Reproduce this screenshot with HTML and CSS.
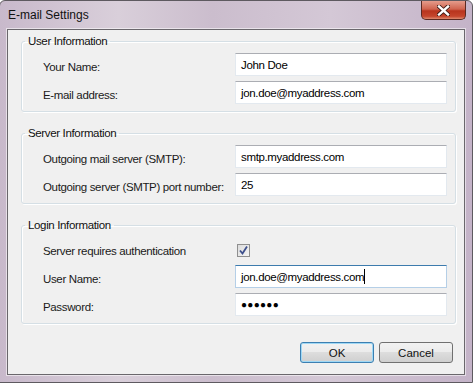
FILE: index.html
```html
<!DOCTYPE html>
<html lang="en">
<head>
    <meta charset="UTF-8">
    <title>E-mail Settings</title>
    <link rel="stylesheet" href="styles.css">
</head>
<body>
    <div class="window">
        <!-- title bar -->
        <div class="titlebar">
            <span class="title">E-mail Settings</span>
            <div class="close">
                <svg width="13" height="11" viewBox="0 0 13 11">
                    <path d="M2 1.5 L11 9.5 M11 1.5 L2 9.5" stroke="#3b1a14" stroke-width="4.2" stroke-linecap="square"/>
                    <path d="M2 1.5 L11 9.5 M11 1.5 L2 9.5" stroke="#fff" stroke-width="2.4" stroke-linecap="square"/>
                </svg>
            </div>
        </div>

        <div class="client">
            <fieldset class="group">
                <legend>User Information</legend>
                <div class="rows">
                    <label>Your Name:</label>
                    <div class="field">John Doe</div>
                    <label>E-mail address:</label>
                    <div class="field">jon.doe@myaddress.com</div>
                </div>
            </fieldset>

            <fieldset class="group">
                <legend>Server Information</legend>
                <div class="rows">
                    <label>Outgoing mail server (SMTP):</label>
                    <div class="field">smtp.myaddress.com</div>
                    <label>Outgoing server (SMTP) port number:</label>
                    <div class="field">25</div>
                </div>
            </fieldset>

            <fieldset class="group">
                <legend>Login Information</legend>
                <div class="rows">
                    <label>Server requires authentication</label>
                    <div class="check-cell">
                        <span class="checkbox">
                            <svg width="11" height="11" viewBox="0 0 11 11">
                                <path d="M2 5.5 L4.5 8.5 L9 1.5" fill="none" stroke="#3d4f8c" stroke-width="1.8"/>
                            </svg>
                        </span>
                    </div>
                    <label>User Name:</label>
                    <div class="field focused">jon.doe@myaddress.com<span class="caret"></span></div>
                    <label>Password:</label>
                    <div class="field password">●●●●●●</div>
                </div>
            </fieldset>

            <div class="buttons">
                <button class="btn default">OK</button>
                <button class="btn">Cancel</button>
            </div>
        </div>
    </div>
</body>
</html>
```

FILE: styles.css
```css
body {
    margin: 0;
    font-family: 'Liberation Sans', Arial, sans-serif;
    font-size: 11.5px;
    letter-spacing: -0.35px;
    color: #1a1a1a;
}
.window {
    width: 474px;
    height: 383px;
    box-sizing: border-box;
    padding: 0 7px 8px 7px;
    border: 1px solid #5e5a60;
    border-radius: 6px 6px 0 0;
    background: linear-gradient(90deg, #c8b9cb 0%, #d9cfda 25%, #cbbdcd 45%, #d4c8d6 70%, #c4b3c8 100%);
    margin-left: -1px;
}
.titlebar {
    height: 28px;
    display: flex;
    justify-content: space-between;
    align-items: flex-start;
}
.title {
    padding-top: 7px;
    padding-left: 1px;
    font-size: 12px;
    letter-spacing: 0;
    color: #111;
}
.close {
    width: 45px;
    height: 19px;
    margin-right: -1px;
    box-sizing: border-box;
    border: 1px solid #5a2a22;
    border-top: none;
    border-radius: 0 0 5px 5px;
    background: linear-gradient(#e59c8c 0%, #d0644f 45%, #b8341d 55%, #c5452c 85%, #de8b70 100%);
    display: flex;
    align-items: center;
    justify-content: center;
}
.client {
    height: 346px;
    box-sizing: border-box;
    border: 1px solid #6a676c;
    box-shadow: 0 0 0 1px rgba(255, 255, 255, 0.55);
    background-color: #f0f0f0;
    padding: 4px 8px 0 13px;
}
.group {
    margin: 0 0 14px 0;
    padding: 5px 0 7px 0;
    border: 1px solid #d5dfe5;
    border-radius: 3px;
    box-shadow: inset 1px 1px 0 #fff, 1px 1px 0 #fff;
}
.group legend {
    margin-left: 3px;
    padding: 0 3px;
    line-height: 14px;
    color: #111;
}
.rows {
    display: grid;
    grid-template-columns: 213px 212px;
    grid-auto-rows: 23px;
    row-gap: 5px;
}
.rows label {
    padding-left: 21px;
    padding-top: 4px;
    display: flex;
    align-items: center;
    white-space: nowrap;
}
.field {
    box-sizing: border-box;
    height: 23px;
    border: 1px solid #e3e9ef;
    border-top-color: #abadb3;
    background-color: #fff;
    padding-left: 5px;
    display: flex;
    align-items: center;
    color: #000;
}
.field.focused {
    border-color: #b5cfe7;
    border-top-color: #3d7bad;
}
.caret {
    width: 1px;
    height: 15px;
    background-color: #000;
}
.field.password {
    font-size: 10px;
    letter-spacing: 0.3px;
}
.check-cell {
    display: flex;
    align-items: center;
    padding-left: 2px;
    padding-top: 4px;
}
.checkbox {
    width: 13px;
    height: 13px;
    box-sizing: border-box;
    border: 1px solid #8f8f8f;
    background: linear-gradient(135deg, #dcdcdc, #f4f4f4);
    display: flex;
    align-items: center;
    justify-content: center;
}
.buttons {
    display: flex;
    justify-content: flex-end;
    gap: 5px;
    margin-top: 18px;
    margin-right: 3px;
}
.btn {
    width: 74px;
    height: 21px;
    box-sizing: border-box;
    border: 1px solid #707070;
    border-radius: 3px;
    background: linear-gradient(#f2f2f2 0%, #ebebeb 50%, #dddddd 50%, #cfcfcf 100%);
    font-family: 'Liberation Sans', Arial, sans-serif;
    font-size: 11.5px;
    color: #111;
    padding: 0;
}
.btn.default {
    border-color: #3c7fb1;
    box-shadow: inset 0 0 0 1px #9fd8f5;
}
```
